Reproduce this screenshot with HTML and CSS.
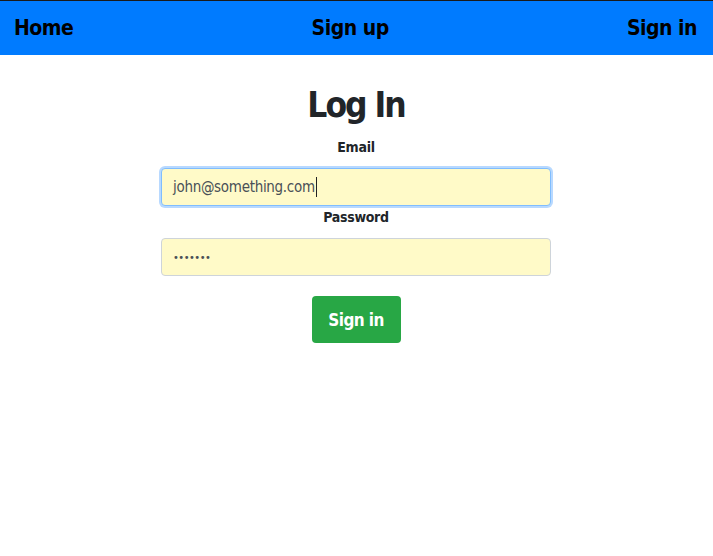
FILE: index.html
```html
<!DOCTYPE html>
<html>
<head>
<meta charset="utf-8">
<link rel="stylesheet" href="styles.css">
</head>
<body>
<nav class="navbar">
  <a class="nav-link" href="#">Home</a>
  <a class="nav-link" href="#">Sign up</a>
  <a class="nav-link" href="#">Sign in</a>
</nav>
<main class="login">
  <h1 class="title">Log In</h1>
  <form class="form">
    <label class="label label-email" for="email">Email</label>
    <div class="input input-focus" id="email"><span>john@something.com</span><span class="caret"></span></div>
    <label class="label label-pw" for="pw">Password</label>
    <div class="input input-pw" id="pw"><span class="dots">•••••••</span></div>
    <button type="button" class="btn">Sign in</button>
  </form>
</main>
</body>
</html>
```
FILE: styles.css
```css
* { box-sizing: border-box; }
body {
  margin: 0;
  font-family: "DejaVu Sans Condensed", "DejaVu Sans", sans-serif;
  font-stretch: condensed;
  color: #212529;
  background: #fff;
}
.navbar {
  display: flex;
  justify-content: space-between;
  align-items: center;
  height: 55px;
  border-top: 1px solid #1a1a1a;
  background: #007bff;
  padding: 0 16px 0 14px;
}
.nav-link {
  color: #000;
  text-decoration: none;
  font-weight: bold;
  font-size: 21px;
  letter-spacing: -0.5px;
}
.login {
  display: flex;
  flex-direction: column;
  align-items: center;
  padding-right: 1px;
}
.title {
  margin: 28px 0 0;
  font-size: 35px;
  font-weight: bold;
  letter-spacing: -2px;
  line-height: 44px;
}
.form {
  display: flex;
  flex-direction: column;
  align-items: center;
  width: 390px;
}
.label {
  font-weight: bold;
  font-size: 14px;
  line-height: 20px;
  letter-spacing: -0.3px;
}
.label-email { margin-top: 10px; }
.label-pw { margin-top: 1px; }
.input {
  width: 390px;
  height: 38px;
  margin-top: 11px;
  display: flex;
  align-items: center;
  padding: 0 11px;
  background: #fffac8;
  border: 1px solid #ced4da;
  border-radius: 4px;
  font-size: 15px;
  color: #495057;
  letter-spacing: -0.3px;
}
.input-focus {
  border-color: #80bdff;
  box-shadow: 0 0 0 2px #b8d9ff;
}
.caret {
  display: inline-block;
  width: 1px;
  height: 20px;
  background: #222;
  margin-left: 1px;
}
.dots {
  font-size: 11px;
  letter-spacing: -0.5px;
}
.btn {
  margin-top: 20px;
  width: 89px;
  height: 47px;
  background: #28a745;
  border: none;
  border-radius: 4px;
  color: #fff;
  font-family: inherit;
  font-stretch: condensed;
  font-weight: bold;
  font-size: 17px;
  letter-spacing: -0.6px;
}
```
